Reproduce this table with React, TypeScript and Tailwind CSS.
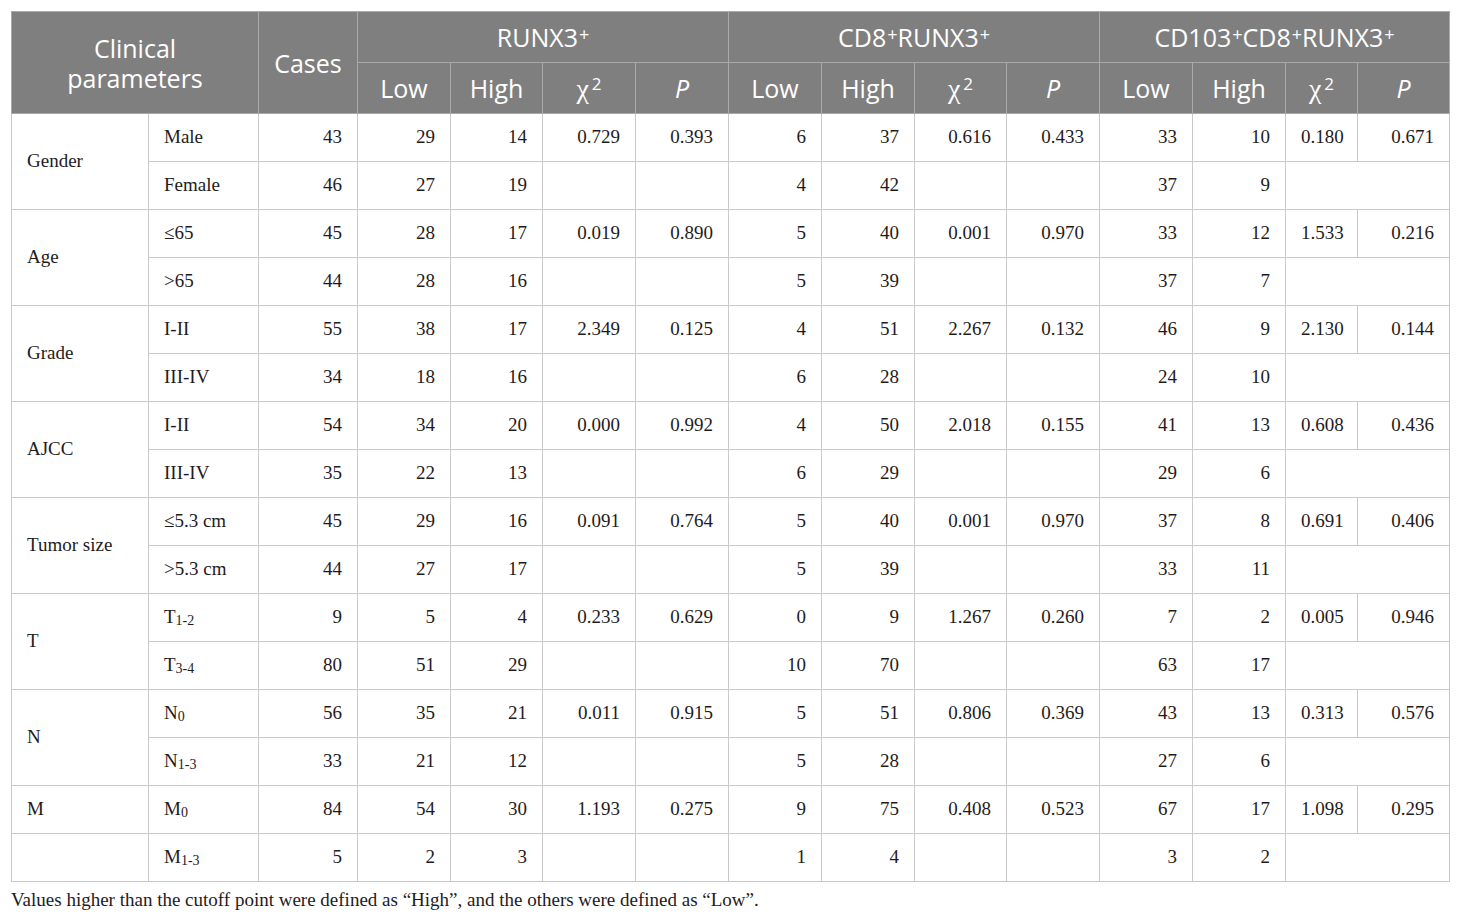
import type { ReactNode } from "react"

type Row = {
  cat?: string
  span?: number
  sub: ReactNode
  vals: string[]
}

const widths = [137, 110, 99, 93, 92, 93, 93, 93, 93, 92, 93, 93, 93, 72, 92]

const Sub = ({ base, s }: { base: string; s: string }) => (
  <span>
    {base}
    <sub className="text-[14px] relative top-[2px]">{s}</sub>
  </span>
)

const rows: Row[] = [
  { cat: "Gender", span: 2, sub: "Male", vals: ["43", "29", "14", "0.729", "0.393", "6", "37", "0.616", "0.433", "33", "10", "0.180", "0.671"] },
  { sub: "Female", vals: ["46", "27", "19", "", "", "4", "42", "", "", "37", "9"] },
  { cat: "Age", span: 2, sub: "≤65", vals: ["45", "28", "17", "0.019", "0.890", "5", "40", "0.001", "0.970", "33", "12", "1.533", "0.216"] },
  { sub: ">65", vals: ["44", "28", "16", "", "", "5", "39", "", "", "37", "7"] },
  { cat: "Grade", span: 2, sub: "I-II", vals: ["55", "38", "17", "2.349", "0.125", "4", "51", "2.267", "0.132", "46", "9", "2.130", "0.144"] },
  { sub: "III-IV", vals: ["34", "18", "16", "", "", "6", "28", "", "", "24", "10"] },
  { cat: "AJCC", span: 2, sub: "I-II", vals: ["54", "34", "20", "0.000", "0.992", "4", "50", "2.018", "0.155", "41", "13", "0.608", "0.436"] },
  { sub: "III-IV", vals: ["35", "22", "13", "", "", "6", "29", "", "", "29", "6"] },
  { cat: "Tumor size", span: 2, sub: "≤5.3 cm", vals: ["45", "29", "16", "0.091", "0.764", "5", "40", "0.001", "0.970", "37", "8", "0.691", "0.406"] },
  { sub: ">5.3 cm", vals: ["44", "27", "17", "", "", "5", "39", "", "", "33", "11"] },
  { cat: "T", span: 2, sub: <Sub base="T" s="1-2" />, vals: ["9", "5", "4", "0.233", "0.629", "0", "9", "1.267", "0.260", "7", "2", "0.005", "0.946"] },
  { sub: <Sub base="T" s="3-4" />, vals: ["80", "51", "29", "", "", "10", "70", "", "", "63", "17"] },
  { cat: "N", span: 2, sub: <Sub base="N" s="0" />, vals: ["56", "35", "21", "0.011", "0.915", "5", "51", "0.806", "0.369", "43", "13", "0.313", "0.576"] },
  { sub: <Sub base="N" s="1-3" />, vals: ["33", "21", "12", "", "", "5", "28", "", "", "27", "6"] },
  { cat: "M", span: 1, sub: <Sub base="M" s="0" />, vals: ["84", "54", "30", "1.193", "0.275", "9", "75", "0.408", "0.523", "67", "17", "1.098", "0.295"] },
  { cat: "", span: 1, sub: <Sub base="M" s="1-3" />, vals: ["5", "2", "3", "", "", "1", "4", "", "", "3", "2"] },
]

// superscript plus in the header
const Plus = () => <sup className="text-[18px] relative -top-[6px] ml-[1px]">+</sup>

const Chi = () => (
  <span className="text-[28px] font-['Liberation_Serif',serif]">
    χ<sup className="text-[17px] relative -top-[8px] ml-[3px] font-['Open_Sans',sans-serif]">2</sup>
  </span>
)

const hd = "border border-[#a9a9a9] text-center font-normal text-white"
const td = "border border-[#c9c9c9] h-[48px] px-[15px] align-middle"

export default function App() {
  return (
    <div className="min-h-screen bg-white pt-[11px] px-[11px] font-['Liberation_Serif',serif]">
      <table className="table-fixed w-[1438px] border border-[#c9c9c9]">
        <colgroup>
          {widths.map((w, i) => (
            <col key={i} style={{ width: w }} />
          ))}
        </colgroup>
        <thead className="bg-[#7f7f7f] text-[25px] leading-[30px] font-['Open_Sans',sans-serif]">
          <tr className="h-[51px]">
            <th colSpan={2} rowSpan={2} className={hd}>
              <div className="leading-[30px]">Clinical</div>
              <div className="leading-[30px]">parameters</div>
            </th>
            <th rowSpan={2} className={hd}>Cases</th>
            <th colSpan={4} className={hd}>
              RUNX3<Plus />
            </th>
            <th colSpan={4} className={hd}>
              CD8<Plus />RUNX3<Plus />
            </th>
            <th colSpan={4} className={hd}>
              CD103<Plus />CD8<Plus />RUNX3<Plus />
            </th>
          </tr>
          <tr className="h-[51px]">
            {[0, 1, 2].map((g) => [
              <th key={g + "l"} className={hd}>Low</th>,
              <th key={g + "h"} className={hd}>High</th>,
              <th key={g + "c"} className={hd}><Chi /></th>,
              <th key={g + "p"} className={hd + " italic"}>P</th>,
            ])}
          </tr>
        </thead>
        <tbody className="text-[19px] text-[#1f1b1c]">
          {rows.map((r, i) => (
            <tr key={i}>
              {r.cat !== undefined && (
                <td rowSpan={r.span} className={td}>{r.cat}</td>
              )}
              <td className={td}>{r.sub}</td>
              {r.vals.map((v, j) => (
                <td key={j} className={td + " text-right"}>{v}</td>
              ))}
              {r.vals.length === 11 && <td colSpan={2} className={td}></td>}
            </tr>
          ))}
        </tbody>
      </table>
      <p className="mt-[7px] text-[19px] leading-[22px] text-[#1f1b1c]">
        Values higher than the cutoff point were defined as “High”, and the others were defined as “Low”.
      </p>
    </div>
  )
}
